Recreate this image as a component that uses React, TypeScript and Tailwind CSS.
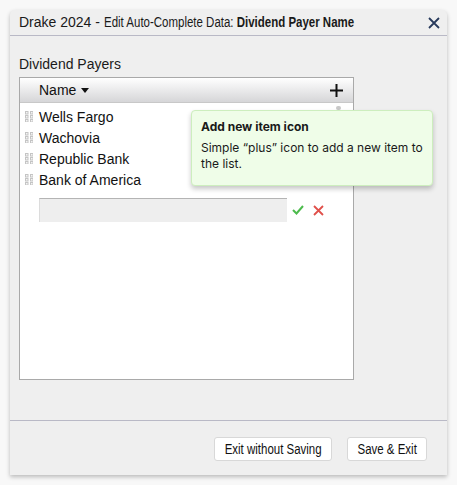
import React from 'react';

const payers = ['Wells Fargo', 'Wachovia', 'Republic Bank', 'Bank of America'];

// the screenshot uses a condensed face; squeeze Liberation Sans to match
const Narrow: React.FC<{ children: React.ReactNode; className?: string }> = ({ children, className = '' }) => (
  <span className={`inline-block whitespace-nowrap scale-x-[0.82] ${className}`}>{children}</span>
);

const GripIcon: React.FC = () => (
  <svg width="8" height="11" viewBox="0 0 8 11" className="shrink-0">
    {[0, 4, 8].map((y) =>
      [0, 5].map((x) => (
        <rect key={`${x}-${y}`} x={x + 0.5} y={y + 0.5} width="2.5" height="2.5" fill="#f4f4f4" stroke="#c4c4c4" strokeWidth="1" />
      ))
    )}
  </svg>
);

const PayerRow: React.FC<{ name: string }> = ({ name }) => (
  <div className="flex items-center h-[21px] pl-[5px] gap-[6px]">
    <GripIcon />
    <span className="text-[14px] leading-none text-[#111]">{name}</span>
  </div>
);

const FooterButton: React.FC<{ label: string; width: string }> = ({ label, width }) => (
  <button className={`flex items-center justify-center h-[24px] ${width} bg-white border border-[#d8d8d8] rounded-[3px] text-[14px] text-[#111]`}>
    <Narrow className="origin-center">{label}</Narrow>
  </button>
);

const App: React.FC = () => {
  return (
    <div className="min-h-screen bg-[#f8f8f8] p-[10px] font-['Liberation_Sans',Arial,sans-serif]">
      <div className="relative flex flex-col w-[437px] h-[465px] bg-[#efefef] rounded-t-[5px] shadow-[0_2px_4px_rgba(0,0,0,0.25)]">
        {/* title bar */}
        <header className="flex items-center justify-between h-[26px] pl-[9px] pr-[7px] border-b border-[#b9b9c6]">
          <h1 className="text-[14px] text-[#1a1a1a] whitespace-nowrap">
            Drake 2024 -{' '}
            <Narrow className="origin-left">
              Edit Auto-Complete Data: <span className="font-bold">Dividend Payer Name</span>
            </Narrow>
          </h1>
          <svg width="12" height="12" viewBox="0 0 12 12">
            <path d="M1 1 L11 11 M11 1 L1 11" stroke="#283a5c" strokeWidth="1.8" />
          </svg>
        </header>

        {/* body */}
        <main className="flex-1 pl-[9px] pt-[20px]">
          <p className="text-[14px] leading-[17px] text-[#1a1a1a]">Dividend Payers</p>
          <div className="relative mt-[4px] w-[335px] h-[303px] bg-white border border-[#a9a9a9]">
            <div className="flex items-center justify-between h-[25px] pl-[19px] pr-[10px] bg-gradient-to-b from-white to-[#d6d6d8] border-b border-[#c8c8c8]">
              <div className="flex items-center gap-[5px] text-[14px] text-[#111]">
                Name
                <svg width="8" height="5" viewBox="0 0 8 5">
                  <path d="M0 0 H8 L4 5 Z" fill="#111" />
                </svg>
              </div>
              <svg width="13" height="13" viewBox="0 0 13 13">
                <path d="M6.5 0 V13 M0 6.5 H13" stroke="#111" strokeWidth="2" />
              </svg>
            </div>
            <div className="absolute right-[12px] top-[28px] w-[5px] h-[4px] rounded-[2px] bg-[#c8c8c8]" />
            <div className="pt-[3px]">
              {payers.map((p) => (
                <PayerRow key={p} name={p} />
              ))}
            </div>
            <div className="flex items-center mt-[8px] pl-[19px] gap-[5px]">
              <div className="w-[248px] h-[24px] bg-[#eeeeee] border-t border-t-[#b4b4b4] border-l border-l-[#dcdcdc]" />
              <svg width="12" height="10" viewBox="0 0 12 10">
                <path d="M1 5 L4.5 8.5 L11 1" fill="none" stroke="#4cbb4c" strokeWidth="2" />
              </svg>
              <svg width="11" height="11" viewBox="0 0 11 11" className="ml-[4px]">
                <path d="M1 1 L10 10 M10 1 L1 10" stroke="#e0504a" strokeWidth="1.8" />
              </svg>
            </div>
          </div>
        </main>

        {/* footer */}
        <footer className="flex justify-end items-start gap-[15px] h-[55px] pt-[16px] pr-[20px] border-t border-[#b9b9c6]">
          <FooterButton label="Exit without Saving" width="w-[118px]" />
          <FooterButton label="Save & Exit" width="w-[80px]" />
        </footer>

        {/* tooltip */}
        <div className="absolute left-[181px] top-[100px] w-[242px] h-[76px] pl-[9px] pt-[8px] pr-[6px] bg-[#effde8] border border-[#cdeebe] rounded-[4px] shadow-[0_3px_5px_rgba(0,0,0,0.22)] font-['Inter',sans-serif] text-[12px] text-[#1a1a1a]">
          <p className="font-bold leading-[16px]">Add new item icon</p>
          <p className="mt-[5px] leading-[16px]">
            Simple “plus” icon to add a new item to
            <br />
            the list.
          </p>
        </div>
      </div>
    </div>
  );
};

export default App;
